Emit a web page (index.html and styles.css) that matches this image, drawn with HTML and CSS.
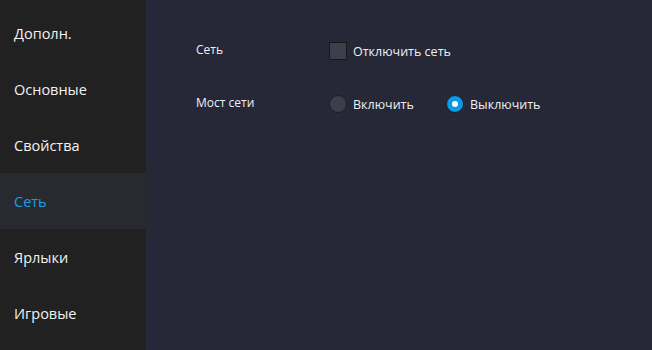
FILE: index.html
```html
<!DOCTYPE html>
<html lang="ru">
<head>
    <meta charset="UTF-8">
    <title>Настройки</title>
    <link rel="stylesheet" href="styles.css">
</head>
<body>
    <div class="window">
        <ul class="menu">
            <li>Дополн.</li>
            <li>Основные</li>
            <li>Свойства</li>
            <li class="active">Сеть</li>
            <li>Ярлыки</li>
            <li>Игровые</li>
        </ul>

        <div class="panel">
            <div class="row">
                <div class="row-label">Сеть</div>
                <label class="option">
                    <span class="check"></span>
                    Отключить сеть
                </label>
            </div>
            <div class="row">
                <div class="row-label">Мост сети</div>
                <label class="option">
                    <span class="radio"></span>
                    Включить
                </label>
                <label class="option">
                    <span class="radio checked"></span>
                    Выключить
                </label>
            </div>
        </div>
    </div>
</body>
</html>
```

FILE: styles.css
```css
body {
    margin: 0;
    font-family: "Open Sans", "Noto Sans", sans-serif;
    background-color: #262838;
}

.window {
    display: flex;
    width: 652px;
    height: 350px;
    overflow: hidden;
}

.menu {
    width: 146px;
    flex-shrink: 0;
    margin: 0;
    padding: 5px 0 0;
    list-style: none;
    background-color: #212121;
}

.menu li {
    height: 56px;
    display: flex;
    align-items: center;
    padding-left: 14px;
    font-size: 14.5px;
    color: #f2f2f2;
}

.menu li.active {
    background-color: #272b30;
    color: #1e9be2;
}

.panel {
    flex: 1;
    padding: 38px 0 0 50px;
}

.row {
    display: flex;
    align-items: center;
    height: 26px;
    margin-bottom: 27px;
}

.row-label {
    width: 133px;
    font-size: 12px;
    color: #f0f0f0;
    margin-top: -4px;
}

.option {
    display: flex;
    align-items: center;
    gap: 6px;
    font-size: 12.5px;
    color: #f0f0f0;
    min-width: 117px;
    white-space: nowrap;
}

.check {
    width: 16px;
    height: 16px;
    border: 1px solid #17181c;
    background-color: #3c3e4c;
}

.radio {
    width: 16px;
    height: 16px;
    border: 1px solid #1c1d24;
    border-radius: 50%;
    background-color: #3c3e4c;
}

.radio.checked {
    background-color: #0c9ae6;
    position: relative;
}

.radio.checked::after {
    content: "";
    position: absolute;
    left: 5px;
    top: 5px;
    width: 6px;
    height: 6px;
    border-radius: 50%;
    background-color: #fff;
}
```
